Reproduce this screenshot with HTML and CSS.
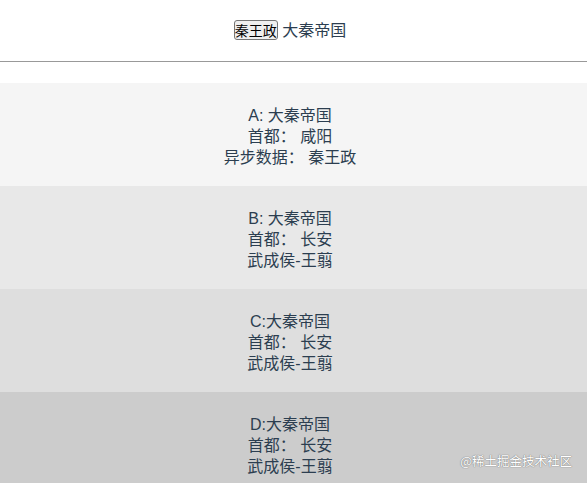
FILE: index.html
```html
<!DOCTYPE html>
<html lang="zh-CN">
  <head>
    <meta charset="UTF-8" />
    <meta name="viewport" content="width=device-width, initial-scale=1.0" />
    <title>大秦帝国</title>
    <link rel="stylesheet" href="styles.css">
  </head>
  <body>
    <div id="app">
      <div class="top">
        <button class="king-btn">秦王政</button> 大秦帝国
      </div>
      <hr class="divider" />

      <div class="block block-a">
        <p>A: 大秦帝国</p>
        <p>首都： 咸阳</p>
        <p>异步数据： 秦王政</p>
      </div>
      <div class="block block-b">
        <p>B: 大秦帝国</p>
        <p>首都： 长安</p>
        <p>武成侯-王翦</p>
      </div>
      <div class="block block-c">
        <p>C:大秦帝国</p>
        <p>首都： 长安</p>
        <p>武成侯-王翦</p>
      </div>
      <div class="block block-d">
        <p>D:大秦帝国</p>
        <p>首都： 长安</p>
        <p>武成侯-王翦</p>
      </div>
    </div>

    <div class="watermark">@稀土掘金技术社区</div>
  </body>
</html>
```

FILE: styles.css
```css
body {
  margin: 0;
  padding: 0;
  font-family: "Liberation Sans", "Noto Sans CJK SC", sans-serif;
  color: #2c3e50;
  background-color: #fff;
  font-size: 16px;
  line-height: 21px;
}

#app {
  text-align: center;
}

.top {
  padding: 20px 7px 0 0;
  height: 21px;
}

.king-btn {
  font-family: "Noto Sans CJK SC", sans-serif;
  font-size: 14px;
  line-height: 18px;
  color: #000;
  background-color: #efefef;
  border: 1px solid #767676;
  border-radius: 3px;
  padding: 0;
  margin: 0;
}

.divider {
  margin: 20px 0 21px;
  border: none;
  border-top: 1px solid #999;
  height: 0;
}

.block {
  padding: 22px 7px 18px 0;
}

.block p {
  margin: 0;
}

.block-a {
  background-color: #f5f5f5;
}

.block-b {
  background-color: #e8e8e8;
}

.block-c {
  background-color: #dedede;
}

.block-d {
  background-color: #cccccc;
}

.watermark {
  position: absolute;
  right: 15px;
  top: 450px;
  font-family: "Noto Sans CJK SC", sans-serif;
  font-size: 12.5px;
  color: #fff;
  text-shadow: 0 0 1px #777, 0 0 1px #777;
}
```
